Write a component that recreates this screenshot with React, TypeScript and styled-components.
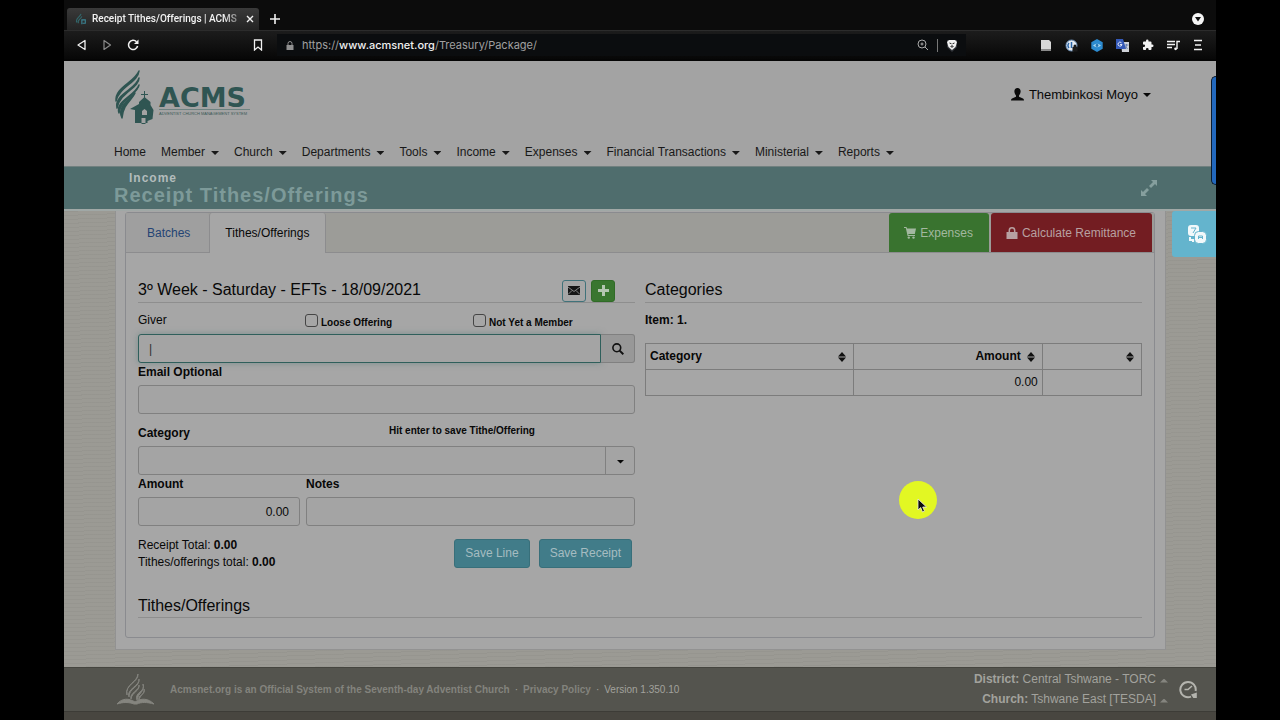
import React from 'react';
import styled, { createGlobalStyle } from 'styled-components';

const GlobalStyle = createGlobalStyle`
  * { box-sizing: border-box; }
  body {
    margin: 0;
    background: #000;
    color: #080808;
    font: 12px/17px "Liberation Sans", Arial, sans-serif;
  }
  button, input, select { font: inherit; color: inherit; margin: 0; }
  button { cursor: pointer; }
  a { color: inherit; text-decoration: none; }
  h1, h2, p { margin: 0; }
  svg { display: block; flex: none; }
`;

const Frame = styled.div`
  position: relative;
  display: flex;
  flex-direction: column;
  min-height: 100vh;
  margin: 0 5%;
  overflow: hidden;
`;

/* Browser window */
const TabStrip = styled.div`
  display: flex;
  align-items: flex-end;
  height: 30px;
  padding: 0 10px 0 3px;
  background: #0c0c0c;
  color: #f2f2f2;
`;
const BrowserTab = styled.div`
  display: flex;
  align-items: center;
  gap: 5px;
  width: 192px;
  height: 22px;
  padding: 0 5px 0 8px;
  border-radius: 3px 3px 0 0;
  background: linear-gradient(#3a3a3a, #232323);
  font: 500 10px/22px Roboto, sans-serif;
`;
const TabTitle = styled.span`
  flex: 1;
  white-space: nowrap;
  mask-image: linear-gradient(90deg, #000 88%, #0004);
`;
const ChromeButton = styled.button<{ $dim?: boolean }>`
  display: grid;
  place-items: center;
  flex: none;
  padding: 0;
  border: 0;
  background: none;
  color: ${p => (p.$dim ? '#8a8a8a' : '#f2f2f2')};
`;
const NewTab = styled(ChromeButton)`
  width: 16px;
  height: 22px;
  margin-left: 8px;
`;
const TabSearch = styled(ChromeButton)`
  width: 16px;
  height: 22px;
  margin-left: auto;
`;
const Toolbar = styled.div`
  display: flex;
  align-items: center;
  height: 31px;
  padding: 0 13px 0 11px;
  border-top: 1px solid #2c2c2c;
  border-bottom: 2px solid #050505;
  background: linear-gradient(#1c1c1c, #070707);
`;
const ToolGroup = styled.div<{ $gap: number }>`
  display: flex;
  align-items: center;
  gap: ${p => p.$gap}px;
`;
const BookmarkSlot = styled.div`
  width: 126px;
  padding-left: 114px;
`;
const AddressBar = styled.div`
  display: flex;
  flex: 1;
  align-items: center;
  gap: 8px;
  height: 22px;
  margin: 0 74px 0 12px;
  padding: 0 8px 0 9px;
  background: #0b0d0f;
  color: #a0a0a0;
  font: 11px/22px Inter, sans-serif;
  b { color: #f0f0f0; font-weight: 500; }
`;
const Url = styled.span`flex: 1;`;
const Divider = styled.span`
  width: 1px;
  height: 13px;
  background: #777;
`;

/* Site header */
const SiteHeader = styled.header`
  height: 105px;
  padding: 9px 50px 0 50px;
  background: #a3a3a3;
`;
const HeaderTop = styled.div`
  display: flex;
  justify-content: space-between;
  height: 72px;
`;
const Brand = styled.a`
  display: flex;
  height: 56px;
  color: #2f5552;
`;
const BrandText = styled.span`
  display: flex;
  flex-direction: column;
  padding-top: 12px;
  margin-left: 5px;
`;
const BrandName = styled.span`
  height: 28px;
  padding-right: 4px;
  border-bottom: 1px solid #6d8381;
  font: bold 27px/32px "DejaVu Sans", sans-serif;
`;
const BrandTag = styled.span`
  color: #3c5957;
  font: 4px/8px "Liberation Sans", sans-serif;
`;
const UserMenu = styled.button`
  display: flex;
  align-items: center;
  gap: 5px;
  height: 20px;
  margin-top: 14px;
  padding: 0 15px 0 0;
  border: 0;
  background: none;
  font-size: 13px;
`;
const Nav = styled.nav`
  display: flex;
  flex-wrap: wrap;
  gap: 15px;
  color: #181818;
`;
const NavItem = styled.button`
  display: flex;
  align-items: center;
  gap: 6px;
  height: 20px;
  padding: 0;
  border: 0;
  background: none;
`;
const Caret = styled.i<{ $up?: boolean; $dim?: boolean }>`
  width: 8px;
  height: 4px;
  margin-top: 2px;
  background: ${p => (p.$dim ? '#85857f' : 'currentColor')};
  clip-path: ${p => (p.$up ? 'polygon(0 100%, 50% 0, 100% 100%)' : 'polygon(0 0, 100% 0, 50% 100%)')};
`;

const Banner = styled.div`
  display: flex;
  justify-content: space-between;
  align-items: center;
  height: 43px;
  padding: 0 58px 0 50px;
  border-top: 1px solid #70807f;
  background: #4f6d6d;
`;
const Crumb = styled.p`
  padding-left: 15px;
  color: #b3bcbc;
  font-size: 12px;
  font-weight: bold;
  line-height: 14px;
  letter-spacing: 1px;
`;
const PageTitle = styled.h1`
  color: #7d9a99;
  font-size: 20px;
  line-height: 20px;
  letter-spacing: 1px;
`;

/* Content */
const Backdrop = styled.main`
  flex: 1;
  padding: 0 50px 17px 51px;
  border-top: 2px solid #a0a8a6;
  background:
    repeating-linear-gradient(178deg, #00000008 0 1px, transparent 1px 4px),
    #9b9a94;
`;
const Card = styled.div`
  padding: 1px 10px 11px 9px;
  border: 1px solid #929292;
  border-top: 0;
  background: #a6a6a6;
`;
const Panel = styled.section`
  border: 1px solid #8a8b8f;
  border-radius: 3px;
`;
const TabBar = styled.div`
  display: flex;
  height: 40px;
  border-bottom: 1px solid #8c8c8e;
  background: #9c9c98;
`;
const PageTab = styled.button<{ $active?: boolean }>`
  height: ${p => (p.$active ? 40 : 39)}px;
  padding: ${p => (p.$active ? '1px 16px 0 15px' : '1px 19px 0 21px')};
  border: 1px solid #8c8c8e;
  border-width: ${p => (p.$active ? '0 1px' : '0')};
  border-radius: 3px 3px 0 0;
  background: ${p => (p.$active ? '#a6a6a6' : '#9f9f9f')};
  color: ${p => (p.$active ? '#080808' : '#244474')};
`;
const TabActions = styled.div`
  display: flex;
  gap: 2px;
  margin-left: auto;
  padding-right: 2px;
`;
const ActionButton = styled.button<{ $tone: 'green' | 'red' }>`
  display: flex;
  align-items: center;
  gap: 4px;
  height: 39px;
  padding: 1px 16px 0 15px;
  border: 0;
  border-radius: 3px 3px 0 0;
  background: ${p => (p.$tone === 'green' ? '#39732f' : '#731d22')};
  color: ${p => (p.$tone === 'green' ? '#a3b8a0' : '#b8a0a1')};
`;
const PanelBody = styled.div`
  padding: 24px 12px 19px;
`;
const Columns = styled.div`
  display: grid;
  grid-template-columns: 1fr 1fr;
  gap: 10px;
`;
const Heading = styled.h2<{ $compact?: boolean }>`
  display: flex;
  align-items: center;
  height: ${p => (p.$compact ? 24 : 26)}px;
  border-bottom: 1px solid #8e8e8e;
  font-size: 16px;
  font-weight: normal;
  line-height: 24px;
`;
const HeadingTools = styled.span`
  display: flex;
  gap: 5px;
  margin-left: auto;
  padding: 2px 20px 0 0;
`;
const SmallButton = styled.button<{ $filled?: boolean }>`
  display: grid;
  place-items: center;
  width: 24px;
  height: 22px;
  padding: 0;
  border: 1px solid ${p => (p.$filled ? '#306b27' : '#40727a')};
  border-radius: 3px;
  background: ${p => (p.$filled ? '#39762f' : '#a6a6a6')};
  color: ${p => (p.$filled ? '#b4c6b1' : '#151515')};
`;
const GiverRow = styled.div`
  display: grid;
  grid-template-columns: 167px 168px 1fr;
  align-items: center;
  height: 31px;
  padding-top: 4px;
`;
const Check = styled.label`
  display: flex;
  align-items: center;
  gap: 3px;
  font-size: 10px;
  font-weight: bold;
  span { padding-top: 4px; }
`;
const CheckBox = styled.input`
  appearance: none;
  width: 13px;
  height: 13px;
  border: 1px solid #454545;
  border-radius: 3px;
`;
const Label = styled.label`
  display: block;
  height: 22px;
  font-weight: bold;
  line-height: 18px;
`;
const inputLook = `
  width: 100%;
  min-width: 0;
  height: 29px;
  padding: 0 10px;
  border: 1px solid #808080;
  border-radius: 3px;
  background: #a4a4a4;
  outline: 0;
`;
const TextInput = styled.input<{ $right?: boolean }>`
  ${inputLook}
  text-align: ${p => (p.$right ? 'right' : 'left')};
`;
const SearchGroup = styled.div`
  display: flex;
`;
const GiverInput = styled(TextInput)`
  flex: 1;
  border-color: #2f5f5b;
  border-radius: 3px 0 0 3px;
  box-shadow: 0 0 6px #5f7f7d99;
  &::placeholder { color: #303030; }
`;
const SearchButton = styled.button`
  display: grid;
  place-items: center;
  width: 34px;
  height: 29px;
  padding: 0;
  border: 1px solid #808080;
  border-left: 0;
  border-radius: 0 3px 3px 0;
  background: #989898;
`;
const CategoryHead = styled.div`
  display: grid;
  grid-template-columns: 251px 1fr;
  padding-top: 10px;
  b { font-size: 10px; line-height: 14px; }
`;
const SelectBox = styled.div`
  display: grid;
  grid-template-columns: 1fr 30px;
`;
const Select = styled.select`
  ${inputLook}
  appearance: none;
  grid-area: 1 / 1 / 2 / 3;
`;
const SelectArrow = styled.span`
  display: grid;
  place-items: center;
  grid-area: 1 / 2;
  border-left: 1px solid #808080;
  pointer-events: none;
`;
const AmountRow = styled.div`
  display: grid;
  grid-template-columns: 162px 1fr;
  gap: 6px;
`;
const TotalsRow = styled.div`
  display: flex;
  justify-content: space-between;
  padding: 13px 3px 0 0;
`;
const Totals = styled.div`
  margin-top: -2px;
`;
const SaveButtons = styled.div`
  display: flex;
  align-items: flex-start;
  gap: 9px;
`;
const SaveButton = styled.button`
  height: 29px;
  padding: 0 10px;
  border: 1px solid #386f7a;
  border-radius: 3px;
  background: #417c89;
  color: #a6bcc1;
`;
const ItemLine = styled.p`
  padding: 9px 0 14px;
  font-weight: bold;
`;
const Table = styled.table`
  width: 100%;
  border-collapse: collapse;
  table-layout: fixed;
  th, td {
    height: 26px;
    padding: 0 4px;
    border: 1px solid #7c7c7c;
    text-align: right;
  }
  th:first-child { width: 42%; }
  th:nth-child(2) { width: 38%; }
`;
const Sortable = styled.span<{ $spread?: boolean }>`
  display: flex;
  align-items: center;
  justify-content: ${p => (p.$spread ? 'space-between' : 'flex-end')};
  gap: 6px;
  padding-right: 3px;
`;
const LowerSection = styled.div`
  padding-top: 23px;
`;

/* Footer */
const Footer = styled.footer`
  display: flex;
  align-items: center;
  height: 44px;
  padding: 0 19px 0 53px;
  border-top: 1px solid #45453f;
  background: #54544e;
  color: #a2a29d;
`;
const FooterText = styled.p`
  display: flex;
  flex: 1;
  gap: 5px;
  margin-left: 16px;
  color: #83837d;
  font-size: 10px;
  font-weight: bold;
  span { color: #a2a29d; font-weight: normal; }
`;
const Places = styled.div`
  display: flex;
  flex-direction: column;
  align-items: flex-end;
  gap: 3px;
  margin-right: 11px;
`;
const Place = styled.button`
  display: flex;
  align-items: center;
  gap: 4px;
  padding: 0;
  border: 0;
  background: none;
  line-height: 17px;
`;
const BottomStrip = styled.div`
  height: 10px;
  border-top: 1px solid #3d3c37;
  background: #484640;
`;

/* Floating pieces */
const TranslateTab = styled.button`
  position: absolute;
  top: 211px;
  right: 0;
  display: grid;
  place-items: center;
  width: 44px;
  height: 46px;
  padding: 0 0 0 6px;
  border: 0;
  border-radius: 3px 0 0 3px;
  background: #64b4cd;
`;
const SideHandle = styled.div`
  position: absolute;
  top: 76px;
  right: 0;
  width: 5px;
  height: 109px;
  border: 1px solid #0b1c30;
  border-right: 0;
  border-radius: 5px 0 0 5px;
  background: #2268bd;
`;
const Pointer = styled.div`
  position: absolute;
  top: 481px;
  left: calc(74% - 17px);
  width: 38px;
  height: 38px;
  border-radius: 50%;
  background: #e2f723;
  svg { margin: 17px 0 0 18px; }
`;

const FlameIcon = ({ size }: { size: number }) => (
  <svg width={size} height={size} viewBox="0 0 14 14" fill="none" stroke="#32666a" strokeWidth="1.3">
    <path d="M2 11C0 6 6 5 7 1M4 12C2 8 7 7 8 4" />
    <path d="M8 13V8h4v4h-3" stroke="#3b8494" />
  </svg>
);

const BrandMark = () => (
  <svg width="40" height="55" viewBox="0 0 40 55" fill="#2f5552">
    <g stroke="#2f5552" strokeWidth="1.5" strokeLinejoin="round">
      <path d="M25 1C24 12 5 17 2 31 1 17 20 13 25 1Z" />
      <path d="M25 8C25 18 6 22 3 38 0 24 22 20 25 8Z" />
      <path d="M25 15C24 24 7 28 5 43 1 31 21 26 25 15Z" />
      <path d="M21 23C18 30 9 34 8 48 3 38 13 31 21 23Z" />
    </g>
    <path d="M30 21h1v3h3v1h-3v4h-1v-4h-3v-1h3Z" />
    <path fillRule="evenodd" d="m30.500 27 6 5v3l3 5-1 9-5 2v2H21V40l-5-1 9-5v-2Zm-2.500 14v4h5v-4l-2.500-2Zm-.5 7v6h4v-6Z" />
  </svg>
);

const SortIcon = () => (
  <svg width="8" height="10" viewBox="0 0 8 10" fill="#111">
    <path d="M4 0l4 4.400H0ZM0 5.600h8L4 10Z" />
  </svg>
);

const menus = ['Member', 'Church', 'Departments', 'Tools', 'Income', 'Expenses', 'Financial Transactions', 'Ministerial', 'Reports'];

export default function App() {
  return (
    <>
      <GlobalStyle />
      <Frame>
        <TabStrip>
          <BrowserTab>
            <FlameIcon size={12} />
            <TabTitle>Receipt Tithes/Offerings | ACMS</TabTitle>
            <ChromeButton aria-label="Close tab">
              <svg width="8" height="8" viewBox="0 0 8 8" stroke="currentColor" strokeWidth="1.400"><path d="M1 1l6 6M7 1L1 7" /></svg>
            </ChromeButton>
          </BrowserTab>
          <NewTab aria-label="New tab">
            <svg width="10" height="10" viewBox="0 0 10 10" stroke="currentColor" strokeWidth="1.600"><path d="M5 0v10M0 5h10" /></svg>
          </NewTab>
          <TabSearch aria-label="Search tabs">
            <svg width="16" height="16" viewBox="0 0 16 16"><circle cx="8" cy="8" r="6" fill="#f5f5f5" /><path d="M5 6h6L8 10.500Z" fill="#111" /></svg>
          </TabSearch>
        </TabStrip>
        <Toolbar>
          <ToolGroup $gap={14}>
            <ChromeButton aria-label="Back">
              <svg width="12" height="12" viewBox="0 0 12 12" fill="none" stroke="currentColor" strokeWidth="1.300" strokeLinejoin="round"><path d="M10 1.500v9L3 6Z" /></svg>
            </ChromeButton>
            <ChromeButton aria-label="Forward" $dim>
              <svg width="12" height="12" viewBox="0 0 12 12" fill="none" stroke="currentColor" strokeWidth="1.200" strokeLinejoin="round"><path d="M3 1.500v9L9.500 6Z" /></svg>
            </ChromeButton>
            <ChromeButton aria-label="Reload">
              <svg width="12" height="12" viewBox="0 0 12 12" fill="none" stroke="currentColor" strokeWidth="1.500"><path d="M9.500 2.800A4.600 4.600 0 1 0 10.600 7" /><path d="M11.500 0.500v4.500H7Z" fill="currentColor" stroke="none" /></svg>
            </ChromeButton>
          </ToolGroup>
          <BookmarkSlot>
            <ChromeButton aria-label="Bookmark">
              <svg width="10" height="12" viewBox="0 0 10 12" fill="none" stroke="currentColor" strokeWidth="1.300"><path d="M1.500 1h7v10L5 8l-3.500 3Z" /></svg>
            </ChromeButton>
          </BookmarkSlot>
          <AddressBar>
            <svg width="8" height="9" viewBox="0 0 8 9" fill="#909090"><path d="M.5 4h7v5h-7Z" /><path d="M2 4V2.500a2 2 0 0 1 4 0V4" fill="none" stroke="#909090" /></svg>
            <Url>https://<b>www.acmsnet.org</b>/Treasury/Package/</Url>
            <svg width="12" height="12" viewBox="0 0 12 12" fill="none" stroke="#aaa"><circle cx="5" cy="5" r="4" /><path d="M8 8l3 3M5 3.500v3M3.500 5h3" /></svg>
            <Divider />
            <svg width="12" height="13" viewBox="0 0 12 13"><path d="M1 1h10v7l-5 5-5-5Z" fill="#34373c" /><path d="M3 1h6l2 2-1.500 5L6 11 2.500 8 1 3Z" fill="#f2f2f2" /><path d="M3.500 4l2 .8M8.500 4l-2 .8M6 6v2M4.500 7L6 8.500 7.500 7" stroke="#222" fill="none" /></svg>
          </AddressBar>
          <ToolGroup $gap={13}>
            <svg width="12" height="13" viewBox="0 0 12 13"><path d="M1 1h8l2 2v9H1Z" fill="#d8d8d8" /><path d="M1 10h10v2H1Z" fill="#8a8a8a" /></svg>
            <svg width="13" height="13" viewBox="0 0 13 13"><circle cx="6.500" cy="6.500" r="5.500" fill="#e5ebf2" stroke="#6a8db5" /><path d="M4 4a3.500 3.500 0 0 0 0 5M6.500 3v6" stroke="#2a65a8" strokeWidth="1.500" fill="none" /><path d="M7.500 8h5v4.500h-5ZM8.500 8V7a1.500 1.500 0 0 1 3 0v1" fill="#1a1a1a" /></svg>
            <svg width="12" height="13" viewBox="0 0 12 13"><path d="M6 0l5.700 3.200v6.600L6 13 .3 9.800V3.200Z" fill="#2c8bd0" /><path d="M2 6.500Q6 3 10 6.500 6 10 2 6.500Z" fill="#a9daf4" /><circle cx="6" cy="6.500" r="1.400" fill="#2372b0" /></svg>
            <svg width="13" height="13" viewBox="0 0 13 13"><path d="M5 3h8v10H6Z" fill="#cfd2d8" /><path d="M0 0h7l3 10H0Z" fill="#3459b8" /><path d="M5.500 3.800A2 2 0 1 0 6 5.500H4" stroke="#dfe5f5" fill="none" /><path d="M8.500 6h4M10.500 5v1c0 2-1 3-2 4M9.500 7.500l2 2.500" stroke="#5470aa" fill="none" strokeWidth=".8" /></svg>
            <svg width="12" height="12" viewBox="0 0 24 24" fill="#f2f2f2"><path d="M20.500 11H19V7a2 2 0 0 0-2-2h-4V3.500a2.500 2.500 0 0 0-5 0V5H4a2 2 0 0 0-2 2v3.800h1.500a2.700 2.700 0 0 1 0 5.400H2V20a2 2 0 0 0 2 2h3.800v-1.500a2.700 2.700 0 0 1 5.400 0V22H17a2 2 0 0 0 2-2v-4h1.500a2.500 2.500 0 0 0 0-5Z" /></svg>
            <svg width="13" height="11" viewBox="0 0 13 11" fill="none" stroke="#f2f2f2" strokeWidth="1.400"><path d="M0 1.500h8M0 4.500h8M0 7.500h5M10 9V1.500h3" /><circle cx="8.600" cy="8.800" r="1.400" fill="#f2f2f2" stroke="none" /></svg>
            <ChromeButton aria-label="Menu">
              <svg width="10" height="12" viewBox="0 0 10 12" stroke="currentColor" strokeWidth="1.300"><path d="M1 1.500h8M2 6h6M1 10.500h8" /></svg>
            </ChromeButton>
          </ToolGroup>
        </Toolbar>

        <SiteHeader>
          <HeaderTop>
            <Brand href="#" aria-label="ACMS home">
              <BrandMark />
              <BrandText>
                <BrandName>ACMS</BrandName>
                <BrandTag>ADVENTIST CHURCH MANAGEMENT SYSTEM</BrandTag>
              </BrandText>
            </Brand>
            <UserMenu>
              <svg width="13" height="13" viewBox="0 0 13 13" fill="#0a0a0a"><path d="M6.500 0C8.700 0 9.800 1.500 9.600 3.800 9.400 5.800 8.700 6.800 8 7.500v1.300l4 1.800c.7.400 1 1 1 1.900H0c0-.9.300-1.500 1-1.900l4-1.800V7.500C4.300 6.800 3.600 5.800 3.400 3.800 3.200 1.500 4.300 0 6.500 0Z" /></svg>
              Thembinkosi Moyo
              <Caret />
            </UserMenu>
          </HeaderTop>
          <Nav>
            <NavItem>Home</NavItem>
            {menus.map(m => (
              <NavItem key={m}>{m}<Caret /></NavItem>
            ))}
          </Nav>
        </SiteHeader>

        <Banner>
          <div>
            <Crumb>Income</Crumb>
            <PageTitle>Receipt Tithes/Offerings</PageTitle>
          </div>
          <svg width="18" height="18" viewBox="0 0 18 18" fill="#869f9e"><path d="M11 1h6v6l-2-2-4 4-2-2 4-4ZM1 11l2 2 4-4 2 2-4 4 2 2H1Z" /></svg>
        </Banner>

        <Backdrop>
          <Card>
            <Panel>
              <TabBar>
                <PageTab>Batches</PageTab>
                <PageTab $active>Tithes/Offerings</PageTab>
                <TabActions>
                  <ActionButton $tone="green">
                    <svg width="12" height="12" viewBox="0 0 12 12" fill="currentColor"><path d="M0 0h2.500L3 1.500h9L10.800 7H4.300l.2 1H11v1H3.600L1.800 1H0Z" /><circle cx="4.800" cy="10.600" r="1.200" /><circle cx="9.500" cy="10.600" r="1.200" /></svg>
                    Expenses
                  </ActionButton>
                  <ActionButton $tone="red">
                    <svg width="12" height="12" viewBox="0 0 12 12" fill="currentColor"><path d="M.5 5h11v7H.5Z" /><path d="M3.300 5V3.500a2.700 2.700 0 0 1 5.400 0V5" fill="none" stroke="currentColor" strokeWidth="1.500" /></svg>
                    Calculate Remittance
                  </ActionButton>
                </TabActions>
              </TabBar>
              <PanelBody>
                <Columns>
                  <form>
                    <Heading>
                      3º Week - Saturday - EFTs - 18/09/2021
                      <HeadingTools>
                        <SmallButton type="button" aria-label="Send e-mail">
                          <svg width="12" height="9" viewBox="0 0 12 9"><path d="M0 0h12v9H0Z" fill="#151515" /><path d="M0 1l6 4.500L12 1M0 8.500l4-4M12 8.500l-4-4" stroke="#a0a0a0" fill="none" strokeWidth=".8" /></svg>
                        </SmallButton>
                        <SmallButton type="button" $filled aria-label="Add">
                          <svg width="11" height="11" viewBox="0 0 11 11" fill="currentColor"><path d="M4 0h3v4h4v3H7v4H4V7H0V4h4Z" /></svg>
                        </SmallButton>
                      </HeadingTools>
                    </Heading>
                    <GiverRow>
                      <label htmlFor="giver">Giver</label>
                      <Check><CheckBox type="checkbox" /><span>Loose Offering</span></Check>
                      <Check><CheckBox type="checkbox" /><span>Not Yet a Member</span></Check>
                    </GiverRow>
                    <SearchGroup>
                      <GiverInput id="giver" placeholder="|" />
                      <SearchButton type="button" aria-label="Search giver">
                        <svg width="12" height="12" viewBox="0 0 12 12" fill="none" stroke="#111"><circle cx="4.800" cy="4.800" r="3.900" strokeWidth="1.600" /><path d="M7.600 7.600l3.700 3.700" strokeWidth="2" /></svg>
                      </SearchButton>
                    </SearchGroup>
                    <Label htmlFor="email">Email Optional</Label>
                    <TextInput id="email" type="email" />
                    <CategoryHead>
                      <Label htmlFor="category">Category</Label>
                      <b>Hit enter to save Tithe/Offering</b>
                    </CategoryHead>
                    <SelectBox>
                      <Select id="category"><option /></Select>
                      <SelectArrow><Caret /></SelectArrow>
                    </SelectBox>
                    <AmountRow>
                      <div>
                        <Label htmlFor="amount">Amount</Label>
                        <TextInput id="amount" defaultValue="0.00" $right />
                      </div>
                      <div>
                        <Label htmlFor="notes">Notes</Label>
                        <TextInput id="notes" />
                      </div>
                    </AmountRow>
                    <TotalsRow>
                      <Totals>
                        <p>Receipt Total: <b>0.00</b></p>
                        <p>Tithes/offerings total: <b>0.00</b></p>
                      </Totals>
                      <SaveButtons>
                        <SaveButton type="button">Save Line</SaveButton>
                        <SaveButton type="button">Save Receipt</SaveButton>
                      </SaveButtons>
                    </TotalsRow>
                  </form>
                  <div>
                    <Heading>Categories</Heading>
                    <ItemLine>Item: 1.</ItemLine>
                    <Table>
                      <thead>
                        <tr>
                          <th><Sortable $spread>Category<SortIcon /></Sortable></th>
                          <th><Sortable>Amount<SortIcon /></Sortable></th>
                          <th><Sortable><SortIcon /></Sortable></th>
                        </tr>
                      </thead>
                      <tbody>
                        <tr><td /><td>0.00</td><td /></tr>
                      </tbody>
                    </Table>
                  </div>
                </Columns>
                <LowerSection>
                  <Heading $compact>Tithes/Offerings</Heading>
                </LowerSection>
              </PanelBody>
            </Panel>
          </Card>
        </Backdrop>

        <Footer>
          <svg width="37" height="33" viewBox="0 0 37 33" fill="#85857f">
            <path d="M0 31c5-6 12-6 18-2 6-4 13-4 19 2-7-2-13-2-17 0h-3C12 29 6 29 0 31Z" stroke="#85857f" />
            <path d="M21 1c1 8-14 11-11 21C8 11 20 10 21 1ZM22 6c1 7-13 10-10 18 0-9 11-10 10-18ZM22 12c1 5-10 8-8 14 1-7 9-8 8-14ZM26 11c3 8-9 8-6 16 1-7 8-8 6-16ZM27 16c2 6-7 6-5 11 1-5 6-6 5-11Z" stroke="#85857f" strokeWidth=".9" />
          </svg>
          <FooterText>
            Acmsnet.org is an Official System of the Seventh-day Adventist Church
            <span>·</span>
            <a href="#">Privacy Policy</a>
            <span>·</span>
            <span>Version 1.350.10</span>
          </FooterText>
          <Places>
            <Place><span><b>District:</b> Central Tshwane - TORC</span><Caret $up $dim /></Place>
            <Place><span><b>Church:</b> Tshwane East [TESDA]</span><Caret $up $dim /></Place>
          </Places>
          <svg width="18" height="19" viewBox="0 0 18 19" fill="none" stroke="#b4b4ae" strokeWidth="2"><path d="M12 16.700A7.700 7.700 0 1 1 16.600 11" /><path d="M5.500 9.500h3.500L13 6" strokeWidth="1.600" /><path d="M17.800 12.500v5.500h-3.500l-2.300-3.500Z" fill="#b4b4ae" stroke="none" /></svg>
        </Footer>
        <BottomStrip />

        <TranslateTab aria-label="Translate">
          <svg width="19" height="19" viewBox="0 0 19 19" fill="#f2f8fa"><rect x="0" y="0" width="11" height="11" rx="3" /><path d="M3 3h5L5 8" stroke="#64b4cd" fill="none" /><path d="M1 12h2v2h3v3H4v-1H1Z" /><rect x="6.500" y="6.500" width="12" height="12" rx="4" stroke="#64b4cd" /><path d="M10.500 14v-3h4v3M10.500 12.500h4" stroke="#64b4cd" fill="none" /></svg>
        </TranslateTab>
        <SideHandle />
        <Pointer>
          <svg width="11" height="15" viewBox="0 0 11 15"><path d="M1 1v11l2.700-2.500L5.500 14l2-.9L5.700 9H9.500Z" fill="#0a0a0a" stroke="#eee" strokeWidth=".8" /></svg>
        </Pointer>
      </Frame>
    </>
  );
}
